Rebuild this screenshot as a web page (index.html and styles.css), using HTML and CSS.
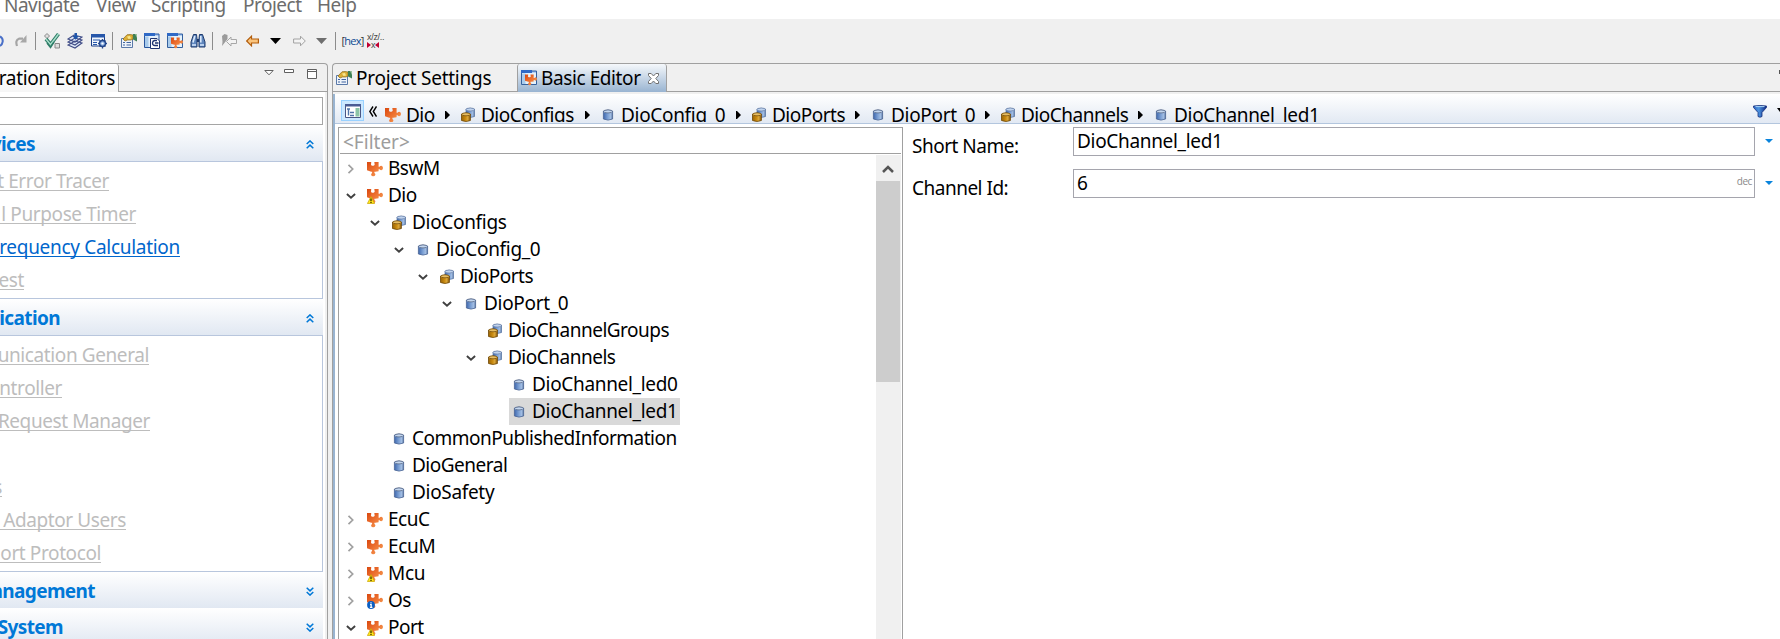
FILE: index.html
```html
<!DOCTYPE html>
<html lang="en">
<head>
<meta charset="utf-8">
<title>Basic Editor</title>
<link rel="stylesheet" href="styles.css">
</head>
<body>
<svg class="defs" width="0" height="0">
  <defs>
    <linearGradient id="gOr" x1="0" y1="0" x2="1" y2="1"><stop offset="0" stop-color="#d9480f"/><stop offset=".5" stop-color="#ee7433"/><stop offset="1" stop-color="#f6a55c"/></linearGradient>
    <linearGradient id="gBl"><stop offset="0" stop-color="#3f68ae"/><stop offset=".5" stop-color="#7fa3d6"/><stop offset=".8" stop-color="#a3bee3"/><stop offset="1" stop-color="#54729f"/></linearGradient>
    <linearGradient id="gGo"><stop offset="0" stop-color="#9a6505"/><stop offset=".45" stop-color="#c98a10"/><stop offset=".7" stop-color="#dba73a"/><stop offset="1" stop-color="#855404"/></linearGradient>
    <linearGradient id="gFu"><stop offset="0" stop-color="#2a62c0"/><stop offset=".4" stop-color="#4d94e0"/><stop offset="1" stop-color="#0c2580"/></linearGradient>
    <symbol id="puz" viewBox="0 0 16 16"><path fill="url(#gOr)" d="M0 1H4.200V2.200Q3.600 3.200 4.300 4.200Q5.700 5.200 7.300 4.200Q8.200 3.200 7.400 2.200V1H11.600V5.800H12.600Q13.200 4.800 14.300 4.800Q16 5.200 16 7Q16 8.800 14.300 9.200Q13.200 9.200 12.600 8.200H11.600V10.200L8.400 10.800H7.400V12Q8.500 12.600 8.400 13.700Q7.900 15.300 6.200 15.300Q4.500 15.300 4.100 13.700Q4.100 12.600 5.100 12V10.800H4.200L0 9.200Z"/></symbol>
    <symbol id="cyl" viewBox="0 0 16 16"><path fill="url(#gBl)" stroke="#4a6594" stroke-width=".8" d="M3.400 4Q8 2 12.600 4V12Q8 14.200 3.400 12Z"/><ellipse cx="8" cy="4.400" rx="4.300" ry="1.500" fill="#c3d6ef" stroke="#4c5b7a" stroke-width=".7"/></symbol>
    <symbol id="cyls" viewBox="0 0 16 16"><path fill="url(#gBl)" stroke="#5472a2" stroke-width=".7" d="M6 2Q10 .400 14.500 2V9.500Q10 11.500 6 9.500Z"/><ellipse cx="10.200" cy="2.500" rx="4.100" ry="1.500" fill="#bfd3ee" stroke="#5b7099" stroke-width=".6"/><path fill="url(#gGo)" stroke="#6f4706" stroke-width=".8" d="M1.500 7Q6 5 10.400 7V13.500Q6 15.500 1.500 13.500Z"/><ellipse cx="6" cy="7.300" rx="4.200" ry="1.500" fill="#e6bd63" stroke="#6f4706" stroke-width=".7"/></symbol>
    <symbol id="warn" viewBox="0 0 8 8"><path fill="#ffe81a" stroke="#c9a400" stroke-width=".7" d="M4 .500L7.600 7.500H.400Z"/><path stroke="#3a3000" stroke-width="1.300" d="M4 2.600V5.200M4 5.900V7"/></symbol>
    <symbol id="info" viewBox="0 0 8 8"><circle cx="4" cy="4" r="3.900" fill="#0a5fc4"/><path stroke="#fff" stroke-width="1.200" d="M4 1.300V2.500M3 3.700H4.200V6.200M2.900 6.300H5.400" fill="none"/></symbol>
    <symbol id="shut" viewBox="0 0 8 10"><path fill="none" stroke="#a0a0a0" stroke-width="1.700" d="M1.500 .900L5.700 5L1.500 9.100"/></symbol>
    <symbol id="open" viewBox="0 0 10 8"><path fill="none" stroke="#404040" stroke-width="1.900" d="M.900 2L5 5.800L9.100 2"/></symbol>
    <symbol id="prj" viewBox="0 0 16 16"><path d="M.500 5.500H11.500V14.500H.500Z" fill="#eef3fa" stroke="#5a79a8"/><path d="M2 9.500H4M2 12H4M5.500 9.500H10M5.500 12H10" stroke="#41659f"/><path d="M2 6L6 1.800L9 1.500L12 2V6L10 7L6.500 7L4 8Z" fill="#dcae36" stroke="#8a6a1c" stroke-width=".7"/><path d="M6 3.500L9 3L10 5.500L7.500 6Z" fill="#f8e68c"/><path d="M12 1H16V8.500L12 6.500Z" fill="#3e8054"/><path d="M14 1H16V5Z" fill="#9cc09a"/></symbol>
    <symbol id="bas" viewBox="0 0 16 16"><path d="M.500 1H15.500V14.500H.500Z" fill="#e4f2fc" stroke="#34609d"/><path d="M0 0H11V3H0Z" fill="#2f69c6"/><path d="M12 1V2.500M14 1V2.500" stroke="#2f69c6"/><path d="M1 3.500H4.500V14H1Z" fill="#a9cbeb"/><svg x="4" y="3.500" width="12" height="12.500"><use href="#puz" width="12" height="12.500"/></svg></symbol>
    <symbol id="up2" viewBox="0 0 8 9"><path fill="none" stroke="#0078d7" stroke-width="1.500" d="M.700 4L4 .900L7.300 4M.700 8.200L4 5.100L7.300 8.200"/></symbol>
    <symbol id="dn2" viewBox="0 0 8 9"><path fill="none" stroke="#0078d7" stroke-width="1.500" d="M.700 .800L4 3.900L7.300 .800M.700 5L4 8.100L7.300 5"/></symbol>
    <symbol id="car" viewBox="0 0 5 8"><path d="M0 0H1L5 4L1 8H0Z"/></symbol>
    <symbol id="arl" viewBox="0 0 13 12"><path d="M.700 6L5.500 1.200V4H12.400V8H5.500V10.800Z"/></symbol>
  </defs>
</svg>

<div class="menu"><span class="m1">Navigate</span><span class="m2">View</span><span class="m3">Scripting</span><span class="m4">Project</span><span>Help</span></div>

<div class="toolbar">
  <svg class="t-undo" width="4" height="13"><path d="M0 1.500Q3 3 2.700 6.500Q2.300 9.500 0 11" fill="none" stroke="#4a70c8" stroke-width="2"/></svg>
  <svg class="t-redo" width="12" height="13"><path d="M2 11Q0 5 4 3.700H8" fill="none" stroke="#a5a5a5" stroke-width="2.200"/><path d="M11.500 0V7.500H5Z" fill="#a8a8a8"/></svg>
  <i class="sep"></i>
  <svg class="t-a" width="17" height="16"><path d="M.500 3L3 .500L5.500 3L3 5.500ZM11 10.500H15.500V15H11Z" fill="#ddd" stroke="#888"/><path d="M2 6L6.500 11.500L14.500 1" fill="none" stroke="#2f7d68" stroke-width="3.600"/><path d="M2 6L6.500 11.500L14.500 1" fill="none" stroke="#a9dfcb" stroke-width="1.400"/><path d="M3 10L6.500 14.500L10 9" fill="none" stroke="#2f7d68" stroke-width="1.500"/></svg>
  <svg class="t-b" width="16" height="16"><path d="M1 12L8 15L15 10L8 8ZM1 9L8 12L15 7L8 5ZM1 6L8 9L15 4L7 2Z" fill="#dfe9f8" stroke="#404c86" stroke-width="1.100"/><path d="M5.500 3H7.500V0H10V3H12L8.500 6.800Z" fill="#1e55aa"/></svg>
  <svg class="t-c" width="16" height="16"><path d="M.500 1.500H13.500V13H.500Z" fill="#f0f5fc" stroke="#1d3f86"/><path d="M0 1H14V4.500H0Z" fill="#2757aa"/><path d="M2 7H9M2 9.500H6M2 11.500H6" stroke="#2757aa"/><circle cx="11.500" cy="10.500" r="3" fill="#8fb3e4" stroke="#24478b" stroke-width="1.300"/><path d="M11.500 6V8M11.500 13V15.500M7 10.500H9M14 10.500H16M8.500 7.500L9.800 8.800M14.500 7.500L13.200 8.800M8.500 13.500L9.800 12.200M14.500 13.500L13.200 12.200" stroke="#24478b" stroke-width="1.300"/><circle cx="11.500" cy="10.500" r="1.100" fill="#fff"/></svg>
  <i class="sep"></i>
  <svg class="t-d" width="16" height="16"><use href="#prj"/></svg>
  <svg class="t-e" width="16" height="16"><path d="M.500 1H15V14.500H.500Z" fill="#e4f0fb" stroke="#29569e"/><path d="M0 0H11V3H0Z" fill="#2f69c6"/><path d="M12 1V2.500M14 1V2.500" stroke="#2f69c6"/><path d="M1 3.500H4.500V14H1Z" fill="#a9cbeb"/><path d="M6.500 5.500H13L15.500 8V15.500H6.500Z" fill="#fff" stroke="#1f3470"/><path d="M13 7.500H10.500Q8.500 8 8.500 10Q8.500 12.500 11 12.500H14M11 10H14.500" fill="none" stroke="#1f3470" stroke-width="1.300"/></svg>
  <svg class="t-f" width="16" height="16"><use href="#bas"/></svg>
  <svg class="t-g" width="16" height="14"><path d="M3.500 .500H6.500L7 5V13H1V8ZM9.500 .500H12.500L15 8V13H9V5Z" fill="#5f86bd" stroke="#1f3b6d"/><path d="M7 5H9V8H7Z" fill="#1f3b6d"/><path d="M4.800 2L3 8.500M10.800 2V8.500" stroke="#dbe9fa" stroke-width="1.600"/><path d="M2 10H6V12H2ZM10 10H14V12H10Z" fill="#b9d0ee"/></svg>
  <i class="sep"></i>
  <svg class="t-h" width="16" height="14"><path d="M1 12L1.500 8L1 2L3.500 0L6.500 1V5L3 9.500Z" fill="#9b9b9b"/><path d="M5.500 7.500L10 3V5.500H15.500V9.500H10V12Z" fill="#f3f3f3" stroke="#a7a7a7"/></svg>
  <svg class="t-i" width="13" height="12" fill="#fbc57e" stroke="#b35e0c" stroke-width="1.200"><use href="#arl"/></svg>
  <svg class="t-j" width="11" height="6"><path d="M0 0H11L5.500 6Z" fill="#000"/></svg>
  <svg class="t-k" width="13" height="12" fill="#f4f4f4" stroke="#a2a2a2"><path d="M12.300 6L7.500 1.200V4H.600V8H7.500V10.800Z"/></svg>
  <svg class="t-l" width="11" height="6"><path d="M0 0H11L5.500 6Z" fill="#6e6e6e"/></svg>
  <i class="sep"></i>
  <span class="hex"><b>[</b>hex<b>]</b></span>
  <span class="xyz"><span>x/z/..</span><span class="xx"><svg width="4" height="6"><path d="M0 0L4 3L0 6Z" fill="#c00030"/></svg>x<svg width="4" height="6"><path d="M4 0L0 3L4 6Z" fill="#c00030"/></svg></span></span>
</div>

<div class="work">
  <section class="left">
    <header class="ltabs">
      <div class="ltab"><span class="cut" style="width:115px">ration Editors</span></div>
      <div class="lctl">
        <svg width="10" height="6"><path d="M.800 .500H9.200L5 4.800Z" fill="#fff" stroke="#606060"/></svg>
        <svg width="10" height="4"><path d="M.500 .500H9.500V3.500H.500Z" fill="#fff" stroke="#606060"/></svg>
        <svg width="10" height="10"><path d="M.500 .500H9.500V9.500H.500ZM.500 2.500H9.500" fill="#fff" stroke="#606060"/></svg>
      </div>
    </header>
    <div class="lbody">
      <div class="search"></div>
      <div class="sec s1"><b class="cut" style="width:35px">vices</b><svg width="8" height="9"><use href="#up2"/></svg></div>
      <div class="links k1">
        <div><a class="cut" style="width:109px">t Error Tracer</a></div>
        <div><a class="cut" style="width:136px">l Purpose Timer</a></div>
        <div><a class="cut on wide" style="width:180px">requency Calculation</a></div>
        <div><a class="cut" style="width:24px">est</a></div>
      </div>
      <div class="sec s2"><b class="cut" style="width:60px">ication</b><svg width="8" height="9"><use href="#up2"/></svg></div>
      <div class="links k2">
        <div><a class="cut" style="width:149px">unication General</a></div>
        <div><a class="cut" style="width:62px">ntroller</a></div>
        <div><a class="cut" style="width:150px">Request Manager</a></div>
        <div></div>
        <div><a class="cut" style="width:2px">s</a></div>
        <div><a class="cut" style="width:126px">Adaptor Users</a></div>
        <div><a class="cut" style="width:101px">ort Protocol</a></div>
      </div>
      <div class="sec s3"><b class="cut" style="width:95px">anagement</b><svg width="8" height="9"><use href="#dn2"/></svg></div>
      <div class="sec s4"><b class="cut" style="width:63px">System</b><svg width="8" height="9"><use href="#dn2"/></svg></div>
    </div>
  </section>

  <section class="right">
    <header class="rtabs">
      <div class="rtab first"><svg width="16" height="16"><use href="#prj"/></svg><span>Project Settings</span></div>
      <div class="rtab active"><svg width="16" height="16"><use href="#bas"/></svg><span>Basic Editor</span>
        <svg class="x" width="11" height="11"><path d="M.500 .500H3.200L5.500 3L7.800 .500H10.500V2.500L7.800 5.500L10.500 8.500V10.500H7.800L5.500 8L3.200 10.500H.500V8.500L3.200 5.500L.500 2.500Z" fill="#fff" stroke="#707070"/></svg></div>
      <i class="tick"></i>
    </header>
    <div class="rbody">
      <div class="crumbs">
        <span class="toggle"><svg width="16" height="14"><path d="M.500 .500H15.500V13.500H.500Z" fill="#fff" stroke="#4a5684"/><path d="M0 0H16V2.500H0Z" fill="#4a5c94"/><path d="M10.500 4H14.500V12.500H10.500Z" fill="#8cc4a6"/><path d="M2 5H5M3.500 5V11.500M5 8.500H9M5 11.500H9" stroke="#4f73a8" stroke-width="1.400" fill="none"/></svg></span>
        <svg class="back" width="8" height="11"><path d="M4 .500L.800 5.500L4 10.500M7.500 .500L4.300 5.500L7.500 10.500" fill="none" stroke="#000" stroke-width="1.400"/></svg>
        <div class="trail">
          <svg class="ic" width="16" height="16"><use href="#puz"/></svg><span style="width:39px">Dio</span><svg class="ca" width="5" height="8"><use href="#car"/></svg>
          <svg class="ic" width="16" height="16"><use href="#cyls"/></svg><span style="width:104px">DioConfigs</span><svg class="ca" width="5" height="8"><use href="#car"/></svg>
          <svg class="ic" width="16" height="16"><use href="#cyl"/></svg><span class="us" style="width:115px">DioConfig_0</span><svg class="ca" width="5" height="8"><use href="#car"/></svg>
          <svg class="ic" width="16" height="16"><use href="#cyls"/></svg><span style="width:83px">DioPorts</span><svg class="ca" width="5" height="8"><use href="#car"/></svg>
          <svg class="ic" width="16" height="16"><use href="#cyl"/></svg><span class="us" style="width:94px">DioPort_0</span><svg class="ca" width="5" height="8"><use href="#car"/></svg>
          <svg class="ic" width="16" height="16"><use href="#cyls"/></svg><span style="width:117px">DioChannels</span><svg class="ca" width="5" height="8"><use href="#car"/></svg>
          <svg class="ic" width="16" height="16"><use href="#cyl"/></svg><span class="us">DioChannel_led1</span>
        </div>
        <svg class="funnel" width="14" height="13"><path d="M.500 1Q7 -.200 13.500 1V2.500L9 7.500V11.500Q7 13 5 11.500V7.500L.500 2.500Z" fill="url(#gFu)" stroke="#17307c" stroke-width=".8"/><path d="M2.500 1.600H11.500" stroke="#a9d3f5"/></svg>
        <svg class="fcar" width="3" height="4"><path d="M0 0H3V4Z"/></svg>
      </div>
      <div class="cols">
        <div class="treebox">
          <div class="filter">&lt;Filter&gt;</div>
          <div class="treewrap">
            <div class="tree">
              <div class="row l0"><svg class="tw" width="8" height="10"><use href="#shut"/></svg><div class="node"><svg width="16" height="16"><use href="#puz"/></svg><span>BswM</span></div></div>
              <div class="row l0"><svg class="tw" width="10" height="8"><use href="#open"/></svg><div class="node"><svg width="16" height="16"><use href="#puz"/><use href="#warn" y="8" width="8" height="8"/></svg><span>Dio</span></div></div>
              <div class="row l1"><svg class="tw" width="10" height="8"><use href="#open"/></svg><div class="node"><svg width="16" height="16"><use href="#cyls"/></svg><span class="us">DioConfigs</span></div></div>
              <div class="row l2"><svg class="tw" width="10" height="8"><use href="#open"/></svg><div class="node"><svg width="16" height="16"><use href="#cyl"/></svg><span class="us">DioConfig_0</span></div></div>
              <div class="row l3"><svg class="tw" width="10" height="8"><use href="#open"/></svg><div class="node"><svg width="16" height="16"><use href="#cyls"/></svg><span>DioPorts</span></div></div>
              <div class="row l4"><svg class="tw" width="10" height="8"><use href="#open"/></svg><div class="node"><svg width="16" height="16"><use href="#cyl"/></svg><span class="us">DioPort_0</span></div></div>
              <div class="row l5"><i class="tw"></i><div class="node"><svg width="16" height="16"><use href="#cyls"/></svg><span>DioChannelGroups</span></div></div>
              <div class="row l5"><svg class="tw" width="10" height="8"><use href="#open"/></svg><div class="node"><svg width="16" height="16"><use href="#cyls"/></svg><span>DioChannels</span></div></div>
              <div class="row l6"><i class="tw"></i><div class="node"><svg width="16" height="16"><use href="#cyl"/></svg><span class="us">DioChannel_led0</span></div></div>
              <div class="row l6"><i class="tw"></i><div class="node sel"><svg width="16" height="16"><use href="#cyl"/></svg><span class="us">DioChannel_led1</span></div></div>
              <div class="row l1"><i class="tw"></i><div class="node"><svg width="16" height="16"><use href="#cyl"/></svg><span>CommonPublishedInformation</span></div></div>
              <div class="row l1"><i class="tw"></i><div class="node"><svg width="16" height="16"><use href="#cyl"/></svg><span>DioGeneral</span></div></div>
              <div class="row l1"><i class="tw"></i><div class="node"><svg width="16" height="16"><use href="#cyl"/></svg><span class="us">DioSafety</span></div></div>
              <div class="row l0"><svg class="tw" width="8" height="10"><use href="#shut"/></svg><div class="node"><svg width="16" height="16"><use href="#puz"/></svg><span>EcuC</span></div></div>
              <div class="row l0"><svg class="tw" width="8" height="10"><use href="#shut"/></svg><div class="node"><svg width="16" height="16"><use href="#puz"/></svg><span class="us">EcuM</span></div></div>
              <div class="row l0"><svg class="tw" width="8" height="10"><use href="#shut"/></svg><div class="node"><svg width="16" height="16"><use href="#puz"/><use href="#warn" y="8" width="8" height="8"/></svg><span class="us">Mcu</span></div></div>
              <div class="row l0"><svg class="tw" width="8" height="10"><use href="#shut"/></svg><div class="node"><svg width="16" height="16"><use href="#puz"/><use href="#info" y="8" width="8" height="8"/></svg><span>Os</span></div></div>
              <div class="row l0"><svg class="tw" width="10" height="8"><use href="#open"/></svg><div class="node"><svg width="16" height="16"><use href="#puz"/><use href="#warn" y="8" width="8" height="8"/></svg><span>Port</span></div></div>
            </div>
            <div class="scroll"><svg width="12" height="10"><path d="M1 8L6 3L11 8" fill="none" stroke="#555" stroke-width="2.500"/></svg><div class="thumb"></div></div>
          </div>
        </div>
        <div class="form">
          <div class="field"><label>Short Name:</label><div class="input"><span class="us">DioChannel_led1</span></div><svg width="8" height="4"><path d="M0 0H8L4 4Z" fill="#0a84dc"/></svg></div>
          <div class="field"><label>Channel Id:</label><div class="input"><span>6</span><small>dec</small></div><svg width="8" height="4"><path d="M0 0H8L4 4Z" fill="#0a84dc"/></svg></div>
        </div>
      </div>
    </div>
  </section>
</div>
</body>
</html>
```
FILE: styles.css
```css
* { box-sizing: border-box; }
body { margin: 0; width: 1780px; height: 639px; overflow: hidden; background: #f0f0f0; color: #000;
  font: 19px/27px "Noto Sans", "Open Sans", sans-serif; letter-spacing: -0.5px; white-space: nowrap; }
svg { display: block; flex: none; }
.defs { position: absolute; }
.us { letter-spacing: -0.32px; }

.menu { height: 19px; background: #fff; color: #6d6d6d; display: flex; padding-left: 4px; overflow: hidden; }
.menu span { margin-top: -8px; }
.m1 { width: 92px; } .m2 { width: 55px; } .m3 { width: 92px; } .m4 { width: 74px; }

.toolbar { height: 44px; display: flex; align-items: center; }
.sep { width: 1px; height: 18px; background: #8c8c8c; flex: none; }
.t-redo { margin: 0 8px 0 11px; }
.t-a { margin: 0 6px 0 8px; } .t-b { margin-right: 8px; } .t-c { margin-right: 5px; }
.t-d { margin: 0 7px 0 8px; } .t-e { margin-right: 7px; } .t-f { margin-right: 7px; } .t-g { margin-right: 6px; }
.t-h { margin: 0 9px 0 8px; } .t-i { margin-right: 11px; } .t-j { margin-right: 12px; } .t-k { margin-right: 10px; } .t-l { margin-right: 8px; }
.hex { margin: 0 6px 0 8px; width: 17px; font: 11px/16px "Open Sans", sans-serif; letter-spacing: -0.8px; color: #0d4a92; display: flex; justify-content: center; }
.hex b { font-weight: 400; color: #333; }
.xyz { display: flex; flex-direction: column; font: 9px/8px "Liberation Sans", sans-serif; letter-spacing: -0.3px; color: #444; }
.xx { display: flex; align-items: center; }

.work { display: flex; height: 576px; }
.cut { display: flex; justify-content: flex-end; flex: none; }

.left { width: 328px; border-top: 1px solid #a0a0a0; border-right: 1px solid #a0a0a0; border-top-right-radius: 4px; display: flex; flex-direction: column; }
.ltabs { height: 28px; display: flex; justify-content: space-between; border-bottom: 1px solid #a0a0a0; }
.ltab { width: 119px; height: 28px; background: linear-gradient(#fff, #f6f6f6); border-right: 1px solid #a0a0a0; border-top-right-radius: 3px; line-height: 29px; letter-spacing: -0.3px; }
.lctl { display: flex; align-items: flex-start; gap: 10px; padding: 5px 10px 0 0; }
.lctl svg:nth-child(2) { margin: 0 3px 0 0; }
.lctl svg:first-child { margin-top: 1px; }
.lbody { flex: 1; background: #fff; border-right: 2px solid #f0f0f0; padding: 5px 2px 0 0; overflow: hidden; }
.search { height: 28px; border: 1px solid #a5a5a5; border-left: 0; }
.sec { display: flex; justify-content: space-between; align-items: center; padding-right: 9px; color: #0078d7; background: linear-gradient(#fff, #e1e8f2); }
.sec b { letter-spacing: -0.6px; }
.s1, .s2 { height: 37px; padding-top: 2px; border-bottom: 1px solid #b8c6dd; }
.s3, .s4 { height: 36px; padding-top: 2px; }
.links { border: 1px solid #b8c6dd; border-width: 0 1px 1px 0; color: #bdbdbd; padding-top: 3px; }
.k1 { height: 137px; } .k2 { height: 236px; }
.links div { height: 33px; padding-top: 3px; }
.links a { height: 23px; border-bottom: 1px solid #bdbdbd; line-height: 27px; letter-spacing: -0.4px; }
.links .on { color: #0066cc; border-color: #0066cc; }
.links .wide { letter-spacing: -0.3px; }

.right { margin-left: 4px; flex: 1; min-width: 0; border: 1px solid #a0a0a0; border-width: 1px 0 0 1px; border-top-left-radius: 4px; display: flex; flex-direction: column; }
.rtabs { height: 28px; border-bottom: 1px solid #a0a0a0; display: flex; }
.rtab { display: flex; align-items: center; gap: 4px; padding-left: 3px; height: 27px; }
.rtab span { padding-top: 2px; }
.first { width: 184px; letter-spacing: -0.25px; }
.active { width: 150px; height: 28px; border: 1px solid #a0a0a0; border-width: 0 1px; background: linear-gradient(#f5f8fb, #99b4d1); border-radius: 3px 3px 0 0; letter-spacing: -0.4px; }
.active span { padding-top: 1px; }
.active .x { margin-left: 3px; }
.tick { margin: 6px 0 0 auto; width: 1px; height: 4px; background: #555; }
.rbody { flex: 1; border-left: 2px solid #99b4d1; margin-top: 2px; background: #fff; overflow: hidden; }
.crumbs { height: 30px; background: linear-gradient(#fff, #e2e9f3); border-bottom: 1px solid #b3c6de; display: flex; overflow: hidden; align-items: flex-start; }
.toggle { margin: 6px 5px 0 6px; width: 23px; height: 21px; background: #cce8ff; border: 1px solid #99d1ff; display: grid; place-items: center; }
.back { margin-top: 12px; }
.trail { height: 28px; margin-left: 8px; overflow: hidden; display: flex; flex: 1; }
.trail span { margin: 8px 0 0 5px; flex: none; }
.ic { margin-top: 13px; }
.ca { margin: 17px 10px 0 0; }
.funnel { margin: 11px 10px 0 0; }
.fcar { margin-top: 14px; }

.cols { display: flex; margin-top: 3px; height: 520px; }
.treebox { margin-left: 3px; width: 565px; border: 1px solid #a0a0a0; border-bottom: 0; }
.filter { height: 26px; margin: 0 1px; border-bottom: 1px solid #a0a0a0; color: #9d9d9d; padding-left: 3px; line-height: 28px; letter-spacing: 0; }
.treewrap { display: flex; margin-top: 1px; height: 490px; }
.tree { flex: 1; min-width: 0; }
.row { height: 27px; display: flex; align-items: center; padding-left: 7px; }
.tw { width: 10px; margin-right: 9px; flex: none; }
.row svg.tw[width="8"] { width: 8px; margin: 0 10px 0 1px; }
.node { height: 27px; display: flex; align-items: center; gap: 5px; padding: 0 2px 0 2px; }
.sel { background: #d9d9d9; }
.l1 { padding-left: 31px; } .l2 { padding-left: 55px; } .l3 { padding-left: 79px; } .l4 { padding-left: 103px; } .l5 { padding-left: 127px; } .l6 { padding-left: 151px; }
.scroll { width: 25px; background: #f0f0f0; margin-right: 1px; display: flex; flex-direction: column; padding-top: 9px; }
.scroll svg { margin-left: 6px; }
.thumb { margin-top: 7px; width: 24px; height: 201px; background: #cdcdcd; }

.form { flex: 1; display: flex; flex-direction: column; gap: 13px; padding-left: 9px; }
.field { display: flex; height: 29px; align-items: flex-start; }
.field label { width: 161px; padding-top: 6px; }
.input { width: 682px; height: 29px; border: 1px solid #a5a5ad; padding: 0 3px; display: flex; justify-content: space-between; }
.field > svg { margin: 12px 0 0 10px; }
small { font: 10px/22px "Open Sans", sans-serif; letter-spacing: -0.4px; color: #8a8a8a; margin-right: -1px; }
```
